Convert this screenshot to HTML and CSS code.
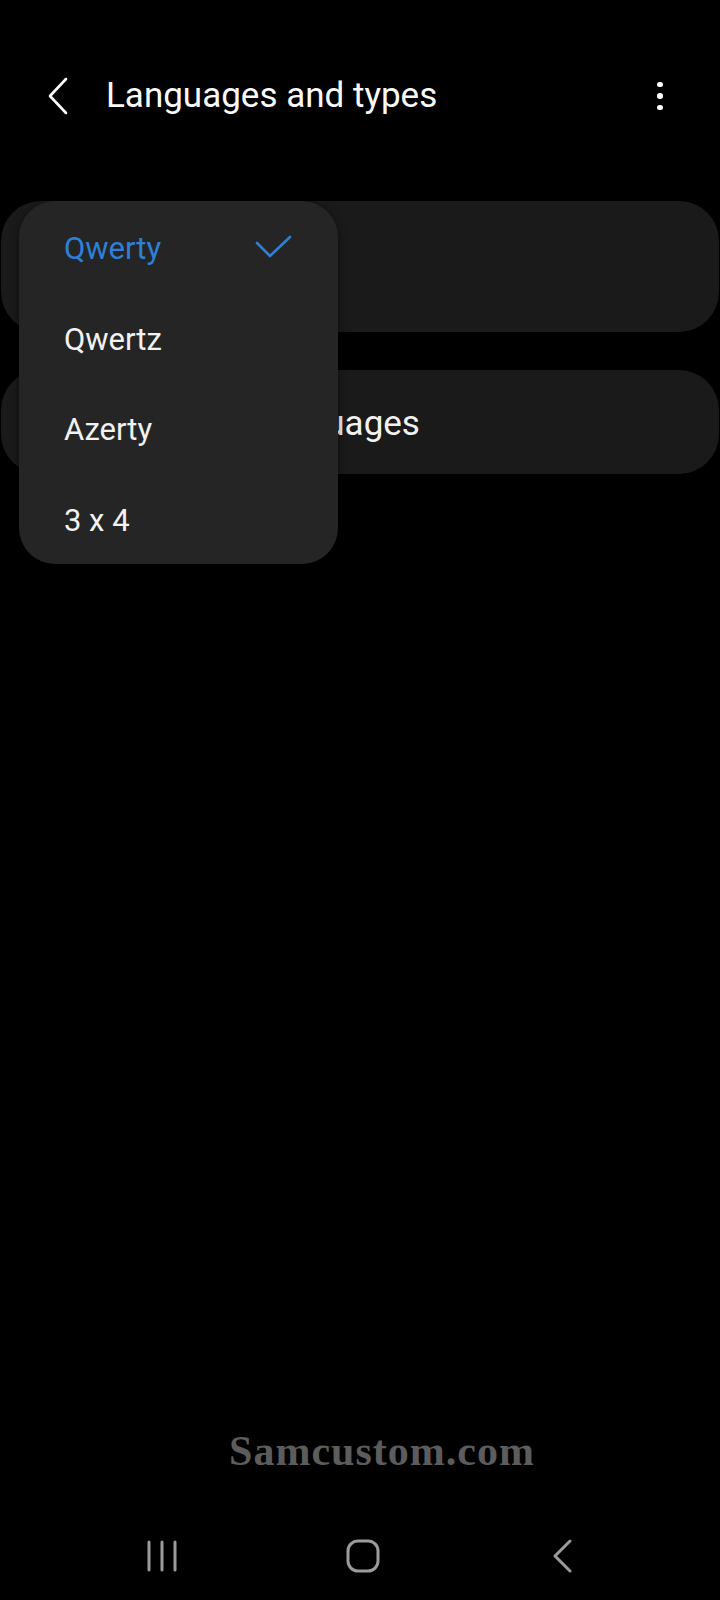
FILE: index.html
```html
<!DOCTYPE html>
<html lang="en">
    <head>
        <meta charset="UTF-8">
        <meta name="viewport" content="width=device-width, initial-scale=1.0">
        <title>Languages and types</title>
        <link rel="stylesheet" href="styles.css">
    </head>
    <body>
        <div class="app">
            <header class="toolbar">
                <button class="icon-btn back-btn" type="button" aria-label="Back">
                    <svg width="24" height="40" viewBox="0 0 24 40">
                        <polyline points="20,3 4,20 20,37" fill="none" stroke="#fff" stroke-width="2.6" stroke-linecap="round" stroke-linejoin="round"/>
                    </svg>
                </button>
                <h1 class="title">Languages and types</h1>
                <button class="icon-btn more-btn" type="button" aria-label="More options">
                    <span class="dot"></span>
                    <span class="dot"></span>
                    <span class="dot"></span>
                </button>
            </header>

            <main class="content">
                <!-- language card, its text sits under the open popup -->
                <div class="card card-lang"></div>
                <div class="card card-manage">
                    <div class="card-title">Manage input languages</div>
                </div>

                <!-- keyboard type popup, open over the first card -->
                <ul class="popup">
                    <li class="popup-item selected">
                        <span>Qwerty</span>
                        <svg class="check" width="38" height="26" viewBox="0 0 38 26">
                            <polyline points="2,8 15,21 35,2" fill="none" stroke="#2f7fd7" stroke-width="2.6" stroke-linecap="round" stroke-linejoin="round"/>
                        </svg>
                    </li>
                    <li class="popup-item"><span>Qwertz</span></li>
                    <li class="popup-item"><span>Azerty</span></li>
                    <li class="popup-item"><span>3 x 4</span></li>
                </ul>
            </main>

            <div class="watermark">Samcustom.com</div>

            <nav class="navbar">
                <button class="nav-btn" type="button" aria-label="Recent apps">
                    <svg width="32" height="34" viewBox="0 0 32 34">
                        <g stroke="#9b9b9b" stroke-width="3" stroke-linecap="round">
                            <line x1="3" y1="3" x2="3" y2="31"/>
                            <line x1="16" y1="3" x2="16" y2="31"/>
                            <line x1="29" y1="3" x2="29" y2="31"/>
                        </g>
                    </svg>
                </button>
                <button class="nav-btn" type="button" aria-label="Home">
                    <svg width="34" height="34" viewBox="0 0 34 34">
                        <rect x="2" y="2" width="30" height="30" rx="10" fill="none" stroke="#9b9b9b" stroke-width="3"/>
                    </svg>
                </button>
                <button class="nav-btn" type="button" aria-label="Back">
                    <svg width="24" height="34" viewBox="0 0 24 34">
                        <polyline points="19,2 4,17 19,32" fill="none" stroke="#9b9b9b" stroke-width="3" stroke-linecap="round" stroke-linejoin="round"/>
                    </svg>
                </button>
            </nav>
        </div>
    </body>
</html>
```

FILE: styles.css
```css
* {
    box-sizing: border-box;
}
body {
    margin: 0;
    background-color: #000;
    font-family: Roboto, "Noto Sans", Arial, sans-serif;
    color: #fafafa;
}
.app {
    display: flex;
    flex-direction: column;
    height: 1600px;
}
.icon-btn,
.nav-btn {
    background: none;
    border: none;
    padding: 0;
    cursor: pointer;
    display: flex;
    align-items: center;
    justify-content: center;
}

/* toolbar */
.toolbar {
    display: flex;
    align-items: center;
    height: 72px;
    margin-top: 60px;
    padding-left: 46px;
    padding-right: 48px;
}
.back-btn {
    width: 24px;
    height: 40px;
}
.title {
    flex: 1;
    margin: 0 0 0 36px;
    font-size: 35px;
    font-weight: 400;
    line-height: 72px;
}
.more-btn {
    flex-direction: column;
    gap: 6px;
    width: 24px;
    height: 40px;
}
.dot {
    width: 5.5px;
    height: 5.5px;
    border-radius: 50%;
    background-color: #fff;
}

/* cards */
.content {
    position: relative;
    display: flex;
    flex-direction: column;
    gap: 38px;
    padding: 69px 1px 0 1px;
}
.card {
    background-color: #1a1a1a;
    border-radius: 40px;
    padding-left: 64px;
    display: flex;
    flex-direction: column;
    justify-content: center;
}
.card-lang {
    height: 131px;
}
.card-manage {
    height: 104px;
    padding-left: 36px;
    padding-top: 2px;
}
.card-title {
    font-size: 35px;
    color: #f2f2f2;
}

/* popup menu */
.popup {
    position: absolute;
    left: 19px;
    top: 69px;
    width: 319px;
    margin: 0;
    padding: 0;
    list-style: none;
    background-color: #252525;
    border-radius: 36px;
    box-shadow: 0 2px 10px rgba(0, 0, 0, 0.45);
}
.popup-item {
    display: flex;
    align-items: center;
    justify-content: space-between;
    height: 90.75px;
    padding: 4px 45px 0 45px;
    font-size: 31px;
    color: #f2f2f2;
}
.popup-item.selected {
    color: #2f7fd7;
}

/* watermark */
.watermark {
    margin-top: auto;
    margin-bottom: 37px;
    padding-left: 44px;
    text-align: center;
    font-family: "Liberation Serif", "Times New Roman", serif;
    font-weight: 700;
    font-size: 42px;
    line-height: 48px;
    letter-spacing: 1px;
    color: #5c5c5c;
}

/* navigation bar */
.navbar {
    display: flex;
    justify-content: space-between;
    align-items: center;
    height: 88px;
    padding: 0 140px 0 145px;
}
.nav-btn {
    width: 34px;
    height: 34px;
}
```
